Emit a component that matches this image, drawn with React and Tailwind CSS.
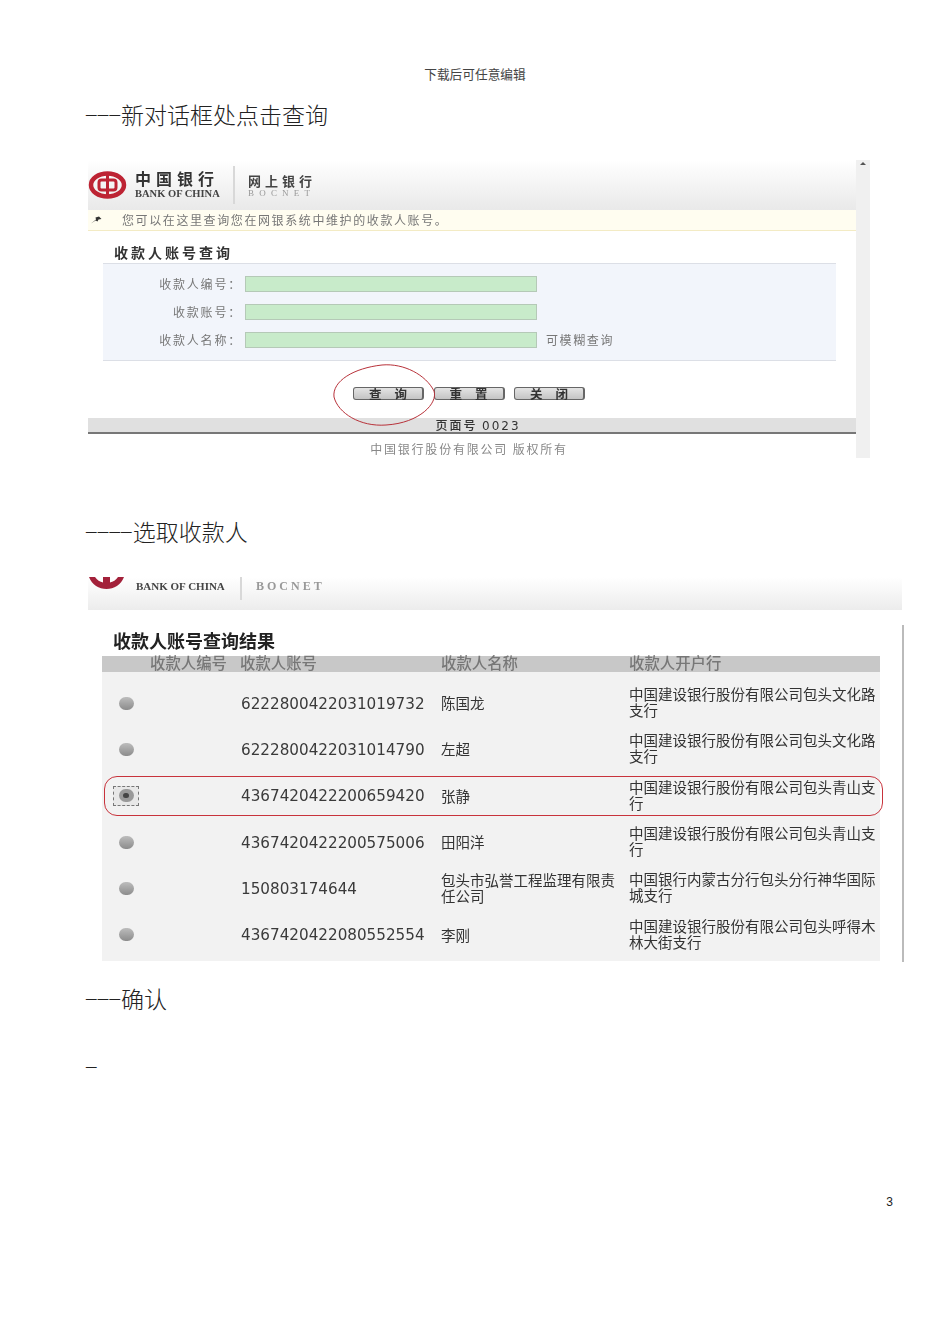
const payees = [
  { account: '6222800422031019732', name: '陈国龙', bank: '中国建设银行股份有限公司包头文化路支行' },
  { account: '6222800422031014790', name: '左超', bank: '中国建设银行股份有限公司包头文化路支行' },
  { account: '4367420422200659420', name: '张静', bank: '中国建设银行股份有限公司包头青山支行', selected: true },
  { account: '4367420422200575006', name: '田阳洋', bank: '中国建设银行股份有限公司包头青山支行' },
  { account: '150803174644', name: '包头市弘誉工程监理有限责任公司', bank: '中国银行内蒙古分行包头分行神华国际城支行' },
  { account: '4367420422080552554', name: '李刚', bank: '中国建设银行股份有限公司包头呼得木林大街支行' },
];

const fields = ['收款人编号：', '收款账号：', '收款人名称：'];

function Heading({ dashes, children }) {
  return (
    <h2 className="h-[32px] pb-[4px] flex items-center text-[23px] leading-[28px] font-light text-[#222]">
      <span className="font-['Liberation_Serif',serif] text-[21px] tracking-[1.2px]">{dashes}</span>
      {children}
    </h2>
  );
}

function BocLogo() {
  return (
    <svg className="w-[39px] h-[30px] shrink-0" viewBox="0 0 39 30">
      <ellipse cx="19.5" cy="15" rx="16.5" ry="11.5" fill="none" stroke="#bd2333" strokeWidth="4.5" />
      <rect x="11" y="10" width="17" height="10" rx="2.5" fill="none" stroke="#bd2333" strokeWidth="3" />
      <path d="M19.5 2v26" stroke="#bd2333" strokeWidth="3" />
    </svg>
  );
}

function Radio() {
  return <span className="block w-[15px] h-[13px] rounded-full bg-linear-to-b from-[#bdbdbd] to-[#8c8c8c]" />;
}

function PayeeRow({ payee }) {
  return (
    <div className="relative grid grid-cols-[48px_90px_201px_188px_1fr] h-[46.3px] items-center text-[14.5px] leading-[16px] text-[#333]">
      <div className="flex justify-center">
        {payee.selected ? (
          <span className="flex items-center justify-center w-[26px] h-[20px] border border-dashed border-[#777] bg-[#e8e8e8]">
            <span className="flex items-center justify-center w-[15px] h-[13px] rounded-full bg-[#999]">
              <span className="w-[6px] h-[5px] rounded-full bg-[#444]" />
            </span>
          </span>
        ) : (
          <Radio />
        )}
      </div>
      <div />
      <div className="pl-px pt-[1px] font-['DejaVu_Sans',sans-serif] text-[15.2px] font-medium text-[#3a3a3a]">{payee.account}</div>
      <div className="pr-[3px]">{payee.name}</div>
      <div className="pr-[2px] pb-[2px]">{payee.bank}</div>
      {payee.selected && (
        <div className="absolute left-[2px] right-[-3px] top-[3px] bottom-[3px] rounded-[13px] border border-[#c8333c]" />
      )}
    </div>
  );
}

export default function App() {
  return (
    <div className="w-[950px] h-[1344px] bg-white font-['Noto_Sans_CJK_SC',sans-serif] pl-[86px] pt-[67px]">
      <p className="h-[16px] ml-[-86px] text-center text-[12.7px] leading-[16px] text-[#444] font-['Liberation_Serif','Noto_Sans_CJK_SC',serif]">
        下载后可任意编辑
      </p>

      <div className="mt-[17px]">
        <Heading dashes="–––">新对话框处点击查询</Heading>
      </div>

      {/* Query form screenshot */}
      <div className="relative flex w-[782px] h-[298px] ml-[2px] mt-[28px]">
        <div className="w-[768px] blur-[0.4px]">
          <div className="flex items-center h-[50px] bg-linear-to-b from-white to-[#e9e9e9]">
            <BocLogo />
            <div className="ml-[8px] mb-[3px] w-[84px]">
              <div className="text-[16px] leading-[16px] font-bold text-[#333] tracking-[5px]">中国银行</div>
              <div className="mt-[3px] text-[10.5px] leading-[9px] font-bold text-[#444] font-['Liberation_Serif',serif] whitespace-nowrap">BANK OF CHINA</div>
            </div>
            <div className="ml-[14px] w-[2px] h-[38px] bg-[#d8d8d8]" />
            <div className="ml-[13px]">
              <div className="text-[13px] leading-[15px] font-bold text-[#444] tracking-[4px]">网上银行</div>
              <div className="text-[9px] leading-[10px] text-[#999] font-['Liberation_Serif',serif] tracking-[5.2px]">BOCNET</div>
            </div>
          </div>
          <div className="flex items-center h-[21px] bg-[#fffdf0] border-b border-[#f3ebc4] text-[12px] tracking-[1.6px] text-[#777]">
            <span className="w-[34px] pl-[3px]">
              <svg className="block w-[11px] h-[8px]" viewBox="0 0 11 8">
                <path d="M0 7.500 5 3.500 4.500 1.500 8 .5 10.500 3 7.500 3.500 6.500 5.500 4.500 4.500Z" fill="#333" />
              </svg>
            </span>
            您可以在这里查询您在网银系统中维护的收款人账号。
          </div>
          <h3 className="ml-[26px] mt-[13px] h-[17px] text-[14px] leading-[17px] font-bold tracking-[3px] text-[#333]">收款人账号查询</h3>
          <div className="ml-[15px] mt-[2px] w-[733px] h-[98px] bg-[#f2f5fb] border-y border-[#dcdfe6] pt-[12px] flex flex-col gap-[12px]">
            {fields.map((label, i) => (
              <div key={label} className="flex items-center h-[16px]">
                <span className="w-[139px] text-right text-[12px] tracking-[1.8px] text-[#777]">{label}</span>
                <span className="ml-[3px] w-[292px] h-[16px] bg-[#c8ebca] border border-[#b5c9b7]" />
                {i === 2 && <span className="ml-[9px] text-[12px] tracking-[1.6px] text-[#777]">可模糊查询</span>}
              </div>
            ))}
          </div>
          <div className="flex gap-[9.5px] ml-[265px] mt-[26px]">
            {['查 询', '重 置', '关 闭'].map((label) => (
              <button key={label} className="w-[71px] h-[13px] rounded-[3px] border border-[#666] border-r-2 bg-linear-to-b from-[#e4e4e4] to-[#c4c4c4] text-[12.5px] font-bold leading-[11px] text-[#333] [word-spacing:10px]">
                {label}
              </button>
            ))}
          </div>
          <div className="h-[16px] mt-[18px] pl-[12px] bg-[#e0e0e0] border-b-2 border-[#777] text-center text-[12px] font-medium leading-[14px] text-[#333] tracking-[2px]">
            页面号 <span className="font-['DejaVu_Sans',sans-serif]">0023</span>
          </div>
          <p className="mt-[7px] pr-[6px] text-center text-[12px] leading-[16px] tracking-[1.8px] text-[#888]">中国银行股份有限公司 版权所有</p>
        </div>
        <div className="w-[14px] bg-[#f0f0f0] flex justify-center pt-[2px]">
          <span className="w-0 h-0 border-x-[3px] border-x-transparent border-b-[3px] border-b-[#555]" />
        </div>
        {/* red marker round the query button */}
        <svg className="absolute left-[243px] top-[203px] w-[108px] h-[64px]" viewBox="0 0 106 64">
          <path d="M50 2C72 0 94 12 102 28 106 40 88 60 54 62 28 64 6 50 2 34 0 18 22 5 50 2Z" fill="none" stroke="#b8323a" strokeWidth="1" />
        </svg>
      </div>

      <div className="mt-[59px]">
        <Heading dashes="––––">选取收款人</Heading>
      </div>

      {/* Result list screenshot */}
      <div className="flex w-[816px] h-[385px] ml-[2px] mt-[28px]">
        <div className="w-[814px] blur-[0.3px]">
          <div className="relative flex items-center h-[33px] bg-linear-to-b from-white to-[#ececec]">
            <svg className="absolute left-0 top-0 w-[37px] h-[14px]" viewBox="0 0 37 14">
              <path d="M1 0C4 8 11 12 18.500 12 26 12 33 8 36 0h-6c-2 3-5 5-8 5.500V0h-7v5.500C12 5 9 3 7 0Z" fill="#a3213a" />
            </svg>
            <span className="ml-[48px] w-[89px] text-[11px] font-bold text-[#444] font-['Liberation_Serif',serif] whitespace-nowrap mb-[16px] leading-[14px]">BANK OF CHINA</span>
            <span className="ml-[15px] w-[2px] h-[23px] self-start bg-[#d8d8d8]" />
            <span className="ml-[14px] text-[12px] font-bold text-[#999] font-['Liberation_Serif',serif] tracking-[3px] mb-[16px] leading-[14px]">BOCNET</span>
          </div>
          <h3 className="ml-[25px] mt-[18px] h-[24px] text-[18px] leading-[24px] font-bold text-[#222]">收款人账号查询结果</h3>
          <div className="ml-[14px] mt-[4px] w-[778px] bg-[#f2f2f2] pb-[3px]">
            <div className="grid grid-cols-[48px_90px_201px_188px_1fr] h-[16px] bg-[#c8c8c8] text-[15.4px] font-medium leading-[12px] text-[#777] mb-[8px]">
              <div />
              <div>收款人编号</div>
              <div>收款人账号</div>
              <div>收款人名称</div>
              <div>收款人开户行</div>
            </div>
            {payees.map((payee) => (
              <PayeeRow key={payee.account} payee={payee} />
            ))}
          </div>
        </div>
        <div className="w-[2px] mt-[48px] bg-[#bbb]" />
      </div>

      <div className="mt-[22px]">
        <Heading dashes="–––">确认</Heading>
      </div>
      <div className="mt-[36px] text-[#222]">
        <Heading dashes="–" />
      </div>

      <p className="mt-[111px] w-[807px] text-right text-[12px] leading-[14px] text-[#222] font-['Liberation_Sans',sans-serif]">3</p>
    </div>
  );
}
